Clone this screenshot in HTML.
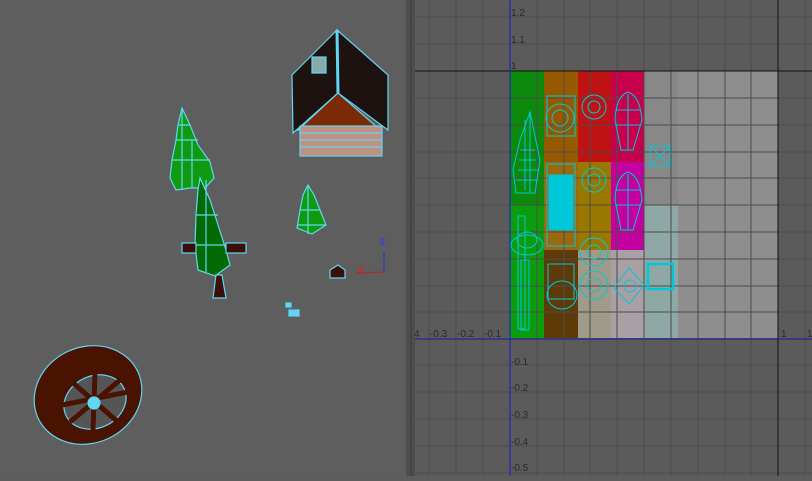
<!DOCTYPE html><html><head><style>body{margin:0;width:812px;height:476px;overflow:hidden;background:#5d5d5d;font-family:"Liberation Sans",sans-serif}</style></head><body>
<svg width="812" height="476" xmlns="http://www.w3.org/2000/svg">
<rect width="812" height="476" fill="#5e5e5e"/>
<!-- house -->
<g stroke="#5fd6f5" stroke-width="1.2">
<polygon points="292,75 337,30 338,93 293,133" fill="#1e1210"/>
<polygon points="337,30 388,75 388,130 338,93" fill="#1e1210"/>
<polygon points="338,93 298,130 378,128" fill="#7a2a04"/>
<rect x="300" y="126" width="82" height="30" fill="#c09080"/>
<line x1="300" y1="133" x2="382" y2="133"/><line x1="300" y1="140" x2="382" y2="140"/><line x1="300" y1="147" x2="382" y2="147"/>
<line x1="337" y1="30" x2="338" y2="93" stroke-width="3"/>
<rect x="312" y="57" width="14" height="16" fill="#8aa"/>
</g>
<!-- trees -->
<g stroke="#5fd6f5" stroke-width="1.2">
<polygon points="182,108 190,125 198,145 210,162 214,178 205,188 190,188 176,190 170,178 172,160 176,140 178,125" fill="#109a10"/>
<path d="M176,140H198M172,160H210M178,125H190M182,108V190M192,140V188" fill="none"/>
<polygon points="200,178 210,200 218,225 226,250 230,265 215,276 198,270 195,245 196,215 198,190" fill="#046a04"/>
<path d="M196,215H218M195,245H226M206,180V272" fill="none"/>
<rect x="182" y="243" width="14" height="10" fill="#3a1008"/><rect x="226" y="243" width="20" height="10" fill="#3a1008"/>
<polygon points="216,275 222,275 226,298 213,298" fill="#3a1008"/>
<polygon points="308,185 314,195 320,210 326,225 312,234 297,228 300,210 303,195" fill="#109a10"/>
<path d="M300,210H320M298,225H326M308,185V234" fill="none"/>
<polygon points="330,270 338,265 345,270 345,278 330,278" fill="#3a1008"/>
<rect x="286" y="303" width="5" height="4" fill="#5fd6f5"/><rect x="289" y="310" width="10" height="6" fill="#5fd6f5"/>
</g>
<text x="358" y="272" fill="#e02020" font-size="10" font-weight="bold">x</text>
<line x1="356" y1="273" x2="384" y2="272" stroke="#c02020"/>
<line x1="384" y1="272" x2="384" y2="252" stroke="#2030e0"/>
<text x="380" y="245" fill="#3040ff" font-size="9" font-weight="bold">Z</text>
<!-- wheel -->
<g stroke="#5fd6f5" stroke-width="1.2" fill="#4a1200">
<ellipse cx="88" cy="395" rx="55" ry="48" transform="rotate(-25 88 395)"/>
<ellipse cx="95" cy="402" rx="32" ry="26" fill="#555" transform="rotate(-25 95 402)"/>
<path d="M62,405 L128,392 M95,374 L93,430 M72,382 L118,422 M70,422 L120,380" stroke-width="5" stroke="#4a1200"/>
<circle cx="94" cy="403" r="6" fill="#5fd6f5"/>
</g>
<!-- separator -->
<rect x="406" y="0" width="9" height="476" fill="#4e4e4e"/>
<rect x="410" y="0" width="2" height="476" fill="#444"/>
<!-- UV panel -->
<rect x="415" y="0" width="397" height="476" fill="#5b5b5b"/>
<g fill="none">
<rect x="510" y="71" width="34" height="134" fill="#0b8a0b"/>
<rect x="510" y="205" width="34" height="133" fill="#0c9c0c"/>
<rect x="544" y="71" width="34" height="91" fill="#975900"/>
<rect x="544" y="162" width="34" height="88" fill="#9a6a10"/>
<rect x="544" y="250" width="34" height="88" fill="#5e3a08"/>
<rect x="578" y="71" width="33" height="91" fill="#bf1212"/>
<rect x="578" y="162" width="33" height="88" fill="#9a7800"/>
<rect x="578" y="250" width="33" height="88" fill="#a09a88"/>
<rect x="611" y="71" width="33" height="91" fill="#c8004c"/>
<rect x="611" y="162" width="33" height="88" fill="#c400a0"/>
<rect x="611" y="250" width="33" height="88" fill="#a8a0a4"/>
<rect x="644" y="71" width="134" height="267" fill="#8e8e8e"/>
<rect x="644" y="71" width="34" height="134" fill="#888"/>
<rect x="644" y="205" width="34" height="133" fill="#8fa8a6"/>
</g>
<g stroke="#4c4c4c" stroke-width="1">
<path d="M429,0V476M456,0V476M483,0V476M537,0V476M564,0V476M590,0V476M617,0V476M644,0V476M671,0V476M698,0V476M725,0V476M751,0V476M805,0V476"/>
<path d="M415,17H812M415,44H812M415,98H812M415,125H812M415,152H812M415,178H812M415,205H812M415,232H812M415,259H812M415,286H812M415,312H812M415,365H812M415,392H812M415,419H812M415,446H812M415,473H812"/>
</g>
<line x1="415" y1="71" x2="812" y2="71" stroke="#111"/>
<line x1="778" y1="0" x2="778" y2="476" stroke="#111"/>
<line x1="415" y1="339" x2="812" y2="339" stroke="#1a1aa0"/>
<line x1="510" y1="0" x2="510" y2="476" stroke="#1a1ad0"/>
<!-- UV wireframes -->
<g stroke="#00c8d8" stroke-width="1" fill="none">
<polygon points="530,112 540,160 535,193 516,193 513,170 520,140"/>
<path d="M518,170H538M520,150H535M525,120V190M530,112V192M516,180H538M519,160H536"/>
<rect x="518" y="216" width="7" height="113"/><rect x="521" y="260" width="8" height="70"/>
<ellipse cx="527" cy="245" rx="16" ry="10"/><ellipse cx="527" cy="240" rx="10" ry="8"/>
<rect x="547" y="96" width="28" height="40"/><circle cx="560" cy="118" r="14"/><circle cx="560" cy="118" r="8"/>
<rect x="547" y="164" width="28" height="82"/><rect x="549" y="175" width="24" height="55" fill="#00c8d8"/>
<rect x="548" y="264" width="26" height="35"/><ellipse cx="562" cy="295" rx="15" ry="14"/>
<circle cx="594" cy="107" r="12"/><circle cx="594" cy="107" r="6"/>
<circle cx="594" cy="180" r="12"/><circle cx="594" cy="180" r="6"/>
<circle cx="594" cy="252" r="14"/><circle cx="594" cy="252" r="7"/><circle cx="594" cy="285" r="14"/><circle cx="594" cy="285" r="7"/>
<path d="M628,92 Q640,96 642,120 L633,150 L621,150 L615,120 Q616,96 628,92Z"/>
<path d="M628,172 Q640,176 642,200 L633,230 L621,230 L615,200 Q616,176 628,172Z"/>
<path d="M628,94V150M616,110H641M616,125H641M628,174V230M616,190H641M616,205H641"/>
<path d="M629,268 L644,285 L629,304 L614,288Z"/><circle cx="630" cy="286" r="6"/>
<rect x="650" y="146" width="20" height="20"/><path d="M650,146L670,166M650,166L670,146"/>
<rect x="648" y="264" width="25" height="25" stroke-width="2.5"/>
</g>
<g fill="#2a2a2a" font-size="10">
<text x="511" y="16">1.2</text><text x="511" y="43">1.1</text><text x="511" y="69">1</text>
<text x="414" y="337">4</text><text x="430" y="337">-0.3</text><text x="457" y="337">-0.2</text><text x="484" y="337">-0.1</text>
<text x="781" y="337">1</text><text x="807" y="337">1</text>
<text x="511" y="365">-0.1</text><text x="511" y="391">-0.2</text><text x="511" y="418">-0.3</text><text x="511" y="445">-0.4</text><text x="511" y="471">-0.5</text>
</g>
</svg>
</body></html>
